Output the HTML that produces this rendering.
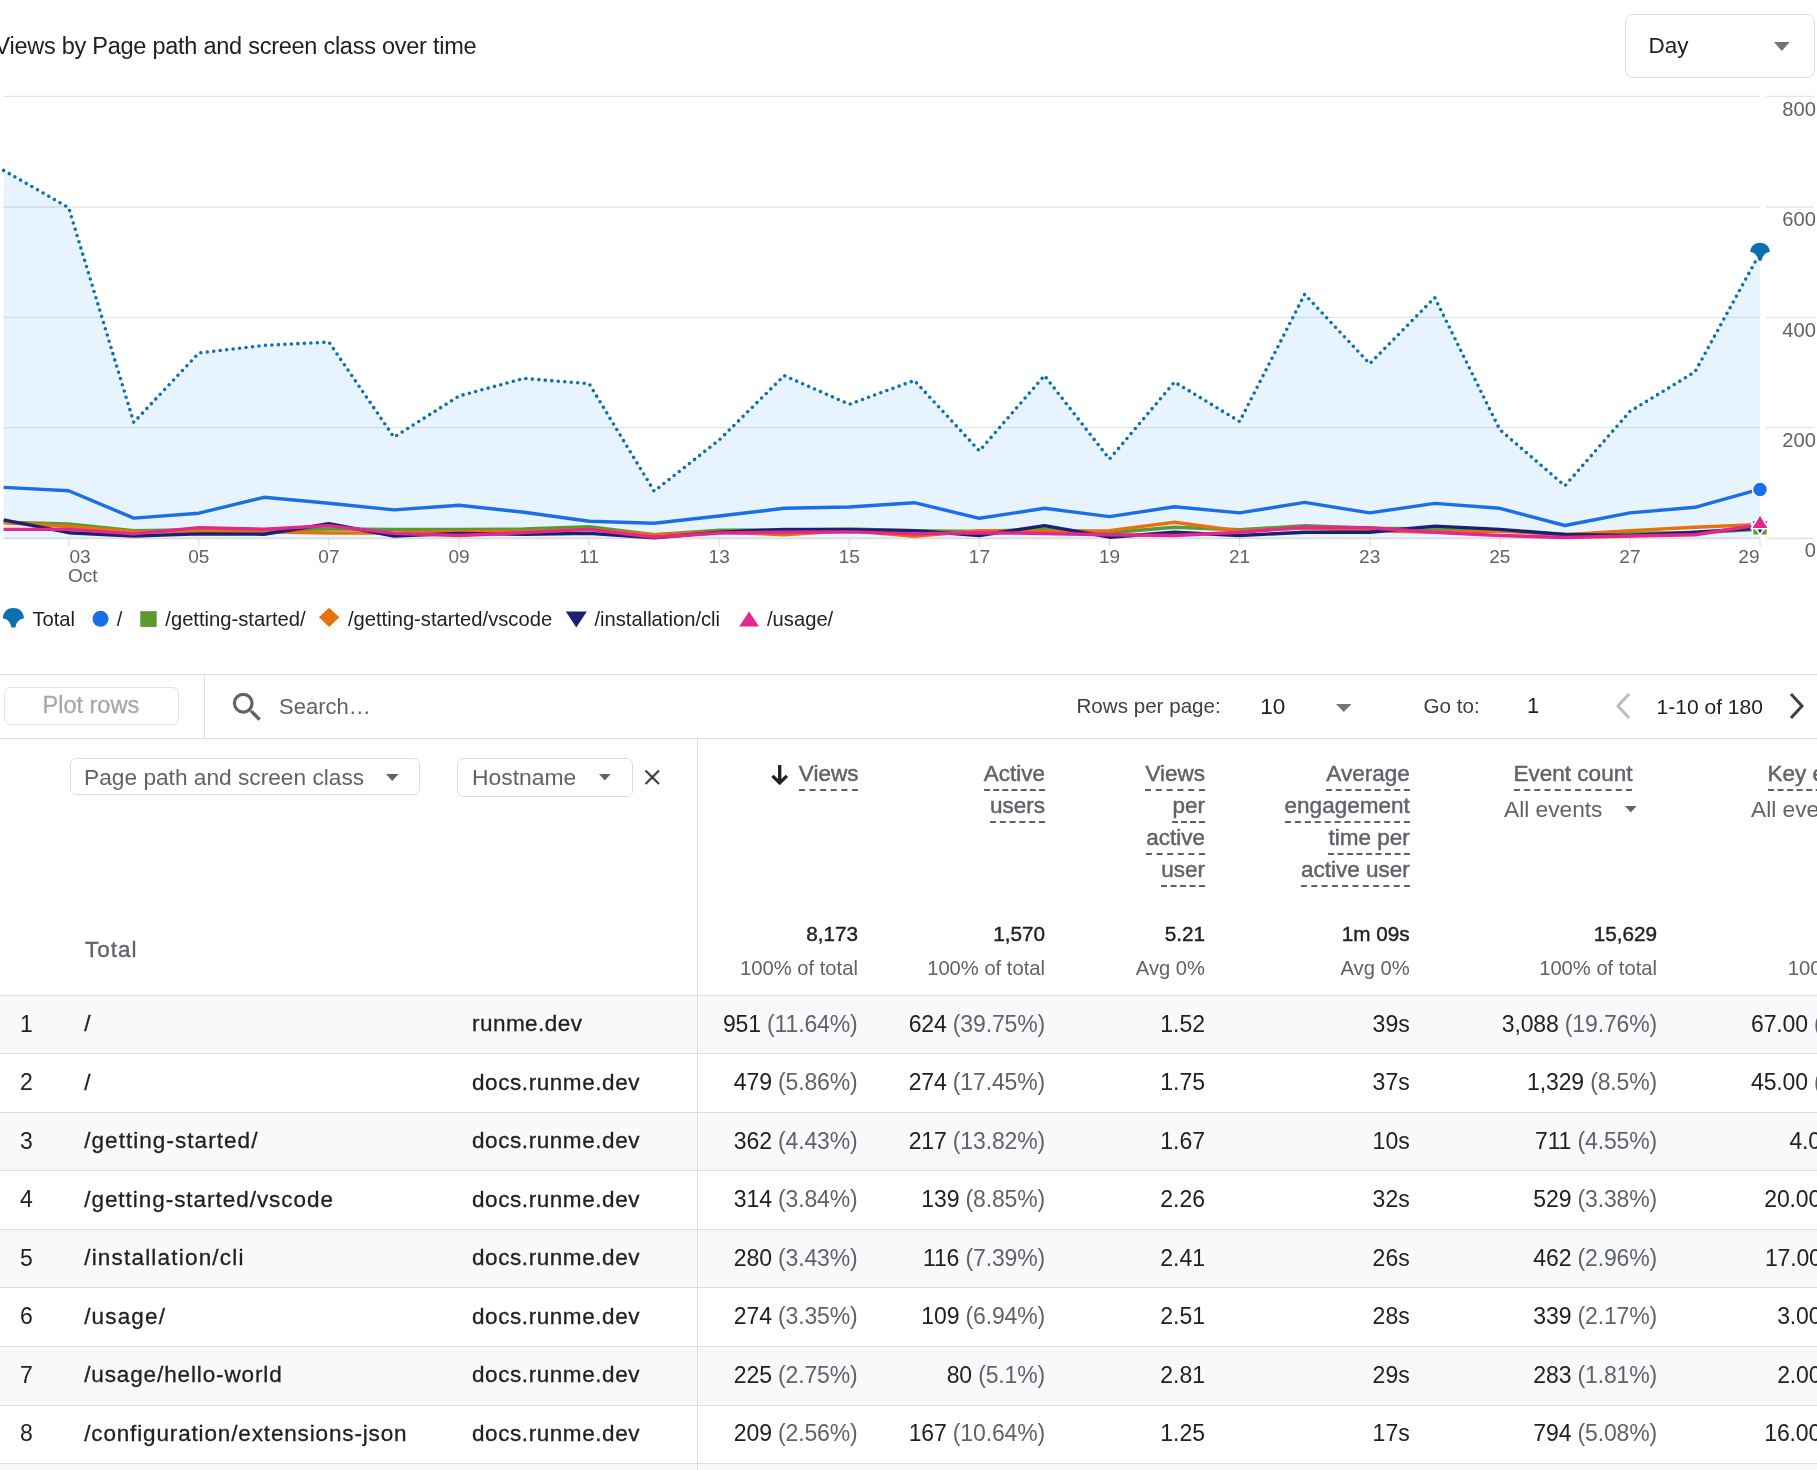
<!DOCTYPE html>
<html><head><meta charset="utf-8"><style>
html,body{margin:0;padding:0;background:#fff;width:1817px;height:1470px;overflow:hidden;position:relative}
body{font-family:"Liberation Sans", sans-serif}
.t{position:absolute;white-space:nowrap}
.u{display:inline-block;border-bottom:2px dashed #5f6368;padding-bottom:3.6px;line-height:inherit}
</style></head><body>
<div id="root" style="position:absolute;left:0;top:0;width:1817px;height:1470px;overflow:hidden;will-change:transform">
<div style="position:absolute;left:0;top:1464px;width:1817px;height:6px;background:#f8f9fa"></div>
<div style="position:absolute;left:0;top:1347px;width:1817px;height:58px;background:#f8f9fa"></div>
<div style="position:absolute;left:0;top:1230px;width:1817px;height:57px;background:#f8f9fa"></div>
<div style="position:absolute;left:0;top:1113px;width:1817px;height:57px;background:#f8f9fa"></div>
<div style="position:absolute;left:0;top:996px;width:1817px;height:57px;background:#f8f9fa"></div>
<svg width="1817" height="600" style="position:absolute;left:0;top:0">
<polygon points="3.65,538.5 3.65,170.40 68.70,207.70 133.75,422.40 198.80,353.00 263.85,345.40 328.90,342.10 393.95,437.20 459.00,396.00 524.05,378.40 589.10,383.70 654.15,491.20 719.20,440.00 784.25,375.60 849.30,404.30 914.35,380.50 979.40,450.90 1044.45,375.60 1109.50,459.10 1174.55,382.00 1239.60,421.50 1304.65,294.30 1369.70,363.70 1434.75,297.60 1499.80,429.70 1564.85,485.80 1629.90,411.50 1694.95,371.90 1760.00,253.00 1760.00,538.5" fill="#e8f4fd"/>
<line x1="3" y1="96.3" x2="1760" y2="96.3" stroke="rgba(0,0,0,0.1)" stroke-width="1.3"/>
<line x1="1766" y1="96.3" x2="1814" y2="96.3" stroke="rgba(0,0,0,0.1)" stroke-width="1.3"/>
<line x1="3" y1="207.0" x2="1760" y2="207.0" stroke="rgba(0,0,0,0.1)" stroke-width="1.3"/>
<line x1="1766" y1="207.0" x2="1814" y2="207.0" stroke="rgba(0,0,0,0.1)" stroke-width="1.3"/>
<line x1="3" y1="317.3" x2="1760" y2="317.3" stroke="rgba(0,0,0,0.1)" stroke-width="1.3"/>
<line x1="1766" y1="317.3" x2="1814" y2="317.3" stroke="rgba(0,0,0,0.1)" stroke-width="1.3"/>
<line x1="3" y1="427.6" x2="1760" y2="427.6" stroke="rgba(0,0,0,0.1)" stroke-width="1.3"/>
<line x1="1766" y1="427.6" x2="1814" y2="427.6" stroke="rgba(0,0,0,0.1)" stroke-width="1.3"/>
<line x1="3" y1="538.5" x2="1760" y2="538.5" stroke="rgba(0,0,0,0.12)" stroke-width="1.3"/>
<line x1="1766" y1="538.5" x2="1814" y2="538.5" stroke="rgba(0,0,0,0.12)" stroke-width="1.3"/>
<line x1="68.70" y1="538.5" x2="68.70" y2="546.5" stroke="rgba(0,0,0,0.12)" stroke-width="1.3"/>
<line x1="198.80" y1="538.5" x2="198.80" y2="546.5" stroke="rgba(0,0,0,0.12)" stroke-width="1.3"/>
<line x1="328.90" y1="538.5" x2="328.90" y2="546.5" stroke="rgba(0,0,0,0.12)" stroke-width="1.3"/>
<line x1="459.00" y1="538.5" x2="459.00" y2="546.5" stroke="rgba(0,0,0,0.12)" stroke-width="1.3"/>
<line x1="589.10" y1="538.5" x2="589.10" y2="546.5" stroke="rgba(0,0,0,0.12)" stroke-width="1.3"/>
<line x1="719.20" y1="538.5" x2="719.20" y2="546.5" stroke="rgba(0,0,0,0.12)" stroke-width="1.3"/>
<line x1="849.30" y1="538.5" x2="849.30" y2="546.5" stroke="rgba(0,0,0,0.12)" stroke-width="1.3"/>
<line x1="979.40" y1="538.5" x2="979.40" y2="546.5" stroke="rgba(0,0,0,0.12)" stroke-width="1.3"/>
<line x1="1109.50" y1="538.5" x2="1109.50" y2="546.5" stroke="rgba(0,0,0,0.12)" stroke-width="1.3"/>
<line x1="1239.60" y1="538.5" x2="1239.60" y2="546.5" stroke="rgba(0,0,0,0.12)" stroke-width="1.3"/>
<line x1="1369.70" y1="538.5" x2="1369.70" y2="546.5" stroke="rgba(0,0,0,0.12)" stroke-width="1.3"/>
<line x1="1499.80" y1="538.5" x2="1499.80" y2="546.5" stroke="rgba(0,0,0,0.12)" stroke-width="1.3"/>
<line x1="1629.90" y1="538.5" x2="1629.90" y2="546.5" stroke="rgba(0,0,0,0.12)" stroke-width="1.3"/>
<line x1="1760.00" y1="538.5" x2="1760.00" y2="546.5" stroke="rgba(0,0,0,0.12)" stroke-width="1.3"/>
<polyline points="3.65,522.30 68.70,524.00 133.75,530.60 198.80,529.80 263.85,529.80 328.90,529.00 393.95,529.40 459.00,529.40 524.05,529.00 589.10,526.80 654.15,534.70 719.20,530.10 784.25,530.00 849.30,529.00 914.35,530.60 979.40,531.40 1044.45,529.00 1109.50,532.70 1174.55,527.30 1239.60,529.80 1304.65,525.60 1369.70,528.10 1434.75,529.00 1499.80,530.60 1564.85,534.40 1629.90,533.00 1694.95,532.70 1760.00,529.40" fill="none" stroke="#5a9a32" stroke-width="3.4" stroke-linejoin="round"/>
<polyline points="3.65,522.80 68.70,526.50 133.75,531.70 198.80,531.40 263.85,531.70 328.90,533.00 393.95,533.00 459.00,531.70 524.05,531.40 589.10,529.50 654.15,534.70 719.20,532.00 784.25,534.70 849.30,530.60 914.35,536.40 979.40,530.60 1044.45,531.40 1109.50,530.60 1174.55,522.30 1239.60,531.00 1304.65,528.10 1369.70,530.60 1434.75,532.20 1499.80,531.00 1564.85,534.70 1629.90,530.60 1694.95,527.30 1760.00,524.50" fill="none" stroke="#e8710a" stroke-width="3.4" stroke-linejoin="round"/>
<polyline points="3.65,519.90 68.70,532.70 133.75,536.00 198.80,533.90 263.85,534.20 328.90,523.70 393.95,536.00 459.00,533.40 524.05,534.30 589.10,533.40 654.15,537.70 719.20,532.20 784.25,529.40 849.30,529.80 914.35,530.60 979.40,535.50 1044.45,525.60 1109.50,537.20 1174.55,532.20 1239.60,535.50 1304.65,532.20 1369.70,532.20 1434.75,526.10 1499.80,529.40 1564.85,534.50 1629.90,535.50 1694.95,532.20 1760.00,528.10" fill="none" stroke="#1c2075" stroke-width="3.4" stroke-linejoin="round"/>
<polyline points="3.65,529.40 68.70,529.40 133.75,533.90 198.80,527.60 263.85,529.20 328.90,525.60 393.95,533.40 459.00,535.50 524.05,532.60 589.10,529.40 654.15,537.20 719.20,533.00 784.25,532.20 849.30,531.90 914.35,533.90 979.40,532.70 1044.45,533.50 1109.50,534.70 1174.55,535.50 1239.60,532.20 1304.65,527.30 1369.70,527.80 1434.75,532.20 1499.80,535.50 1564.85,537.50 1629.90,536.00 1694.95,534.70 1760.00,524.80" fill="none" stroke="#e2288c" stroke-width="3.4" stroke-linejoin="round"/>
<polyline points="3.65,487.40 68.70,490.70 133.75,518.10 198.80,513.20 263.85,497.30 328.90,503.30 393.95,509.90 459.00,505.30 524.05,512.20 589.10,521.20 654.15,523.20 719.20,516.00 784.25,508.30 849.30,507.00 914.35,502.70 979.40,518.30 1044.45,508.30 1109.50,516.60 1174.55,506.80 1239.60,512.90 1304.65,502.40 1369.70,512.90 1434.75,503.40 1499.80,508.30 1564.85,525.50 1629.90,512.90 1694.95,507.30 1760.00,489.20" fill="none" stroke="#1a6fe8" stroke-width="3.4" stroke-linejoin="round"/>
<polyline points="3.65,170.40 68.70,207.70 133.75,422.40 198.80,353.00 263.85,345.40 328.90,342.10 393.95,437.20 459.00,396.00 524.05,378.40 589.10,383.70 654.15,491.20 719.20,440.00 784.25,375.60 849.30,404.30 914.35,380.50 979.40,450.90 1044.45,375.60 1109.50,459.10 1174.55,382.00 1239.60,421.50 1304.65,294.30 1369.70,363.70 1434.75,297.60 1499.80,429.70 1564.85,485.80 1629.90,411.50 1694.95,371.90 1760.00,253.00" fill="none" stroke="#0b70b0" stroke-width="3.6" stroke-linecap="round" stroke-dasharray="0 6.5"/>
<rect x="1752.5" y="520.3" width="15" height="15" fill="#5a9a32" stroke="#fff" stroke-width="1.6"/>
<path d="M1751.5,524.5 L1760.0,516 L1768.5,524.5 L1760.0,533 Z" fill="#e8710a" stroke="#fff" stroke-width="1.6"/>
<path d="M1751.0,520.8 L1769.0,520.8 L1760.0,534.8 Z" fill="#1c2075" stroke="#fff" stroke-width="1.6"/>
<path d="M1751.3,528.7 L1760.0,514.4 L1768.7,528.7 Z" fill="#e2288c" stroke="#fff" stroke-width="1.6"/>
<circle cx="1760.0" cy="489.5" r="7.5" fill="#1a6fe8" stroke="#fff" stroke-width="1.5"/>
<path d="M1749.5,252.5 C1749.5,245.0 1755.0,242 1760.0,242 C1765.0,242 1770.5,245.0 1770.5,252.5 C1766.0,253.0 1763.0,256.0 1762.0,261.5 L1758.0,261.5 C1757.0,256.0 1754.0,253.0 1749.5,252.5 Z" fill="#0b70b0" stroke="#fff" stroke-width="1.5"/>
</svg>
<div class="t" style="left:-5.50px;top:34.62px;font-size:23.5px;line-height:23.5px;color:#202124;font-weight:400;letter-spacing:-0.257px;">Views by Page path and screen class over time</div>
<div style="position:absolute;left:1624.5px;top:14.2px;width:190.9px;height:63.4px;box-sizing:border-box;border:1px solid #dadce0;border-radius:8px"></div>
<div class="t" style="left:1648.60px;top:35.27px;font-size:22.5px;line-height:22.5px;color:#202124;font-weight:400;">Day</div>
<svg style="position:absolute;left:1774px;top:42px" width="16" height="9"><path d="M0,0 L15.7,0 L7.85,9 Z" fill="#757575"/></svg>
<div class="t" style="right:1.00px;top:98.73px;font-size:20.2px;line-height:20.2px;color:#5f6368;font-weight:400;">800</div>
<div class="t" style="right:1.00px;top:209.43px;font-size:20.2px;line-height:20.2px;color:#5f6368;font-weight:400;">600</div>
<div class="t" style="right:1.00px;top:319.73px;font-size:20.2px;line-height:20.2px;color:#5f6368;font-weight:400;">400</div>
<div class="t" style="right:1.00px;top:430.03px;font-size:20.2px;line-height:20.2px;color:#5f6368;font-weight:400;">200</div>
<div class="t" style="right:1.00px;top:539.93px;font-size:20.2px;line-height:20.2px;color:#5f6368;font-weight:400;">0</div>
<div class="t" style="left:69.40px;top:546.55px;font-size:19px;line-height:19px;color:#5f6368;font-weight:400;">03</div>
<div class="t" style="left:68.10px;top:565.75px;font-size:19px;line-height:19px;color:#5f6368;font-weight:400;">Oct</div>
<div class="t" style="left:-301.20px;width:1000px;text-align:center;top:546.55px;font-size:19px;line-height:19px;color:#5f6368;font-weight:400;">05</div>
<div class="t" style="left:-171.10px;width:1000px;text-align:center;top:546.55px;font-size:19px;line-height:19px;color:#5f6368;font-weight:400;">07</div>
<div class="t" style="left:-41.00px;width:1000px;text-align:center;top:546.55px;font-size:19px;line-height:19px;color:#5f6368;font-weight:400;">09</div>
<div class="t" style="left:89.10px;width:1000px;text-align:center;top:546.55px;font-size:19px;line-height:19px;color:#5f6368;font-weight:400;">11</div>
<div class="t" style="left:219.20px;width:1000px;text-align:center;top:546.55px;font-size:19px;line-height:19px;color:#5f6368;font-weight:400;">13</div>
<div class="t" style="left:349.30px;width:1000px;text-align:center;top:546.55px;font-size:19px;line-height:19px;color:#5f6368;font-weight:400;">15</div>
<div class="t" style="left:479.40px;width:1000px;text-align:center;top:546.55px;font-size:19px;line-height:19px;color:#5f6368;font-weight:400;">17</div>
<div class="t" style="left:609.50px;width:1000px;text-align:center;top:546.55px;font-size:19px;line-height:19px;color:#5f6368;font-weight:400;">19</div>
<div class="t" style="left:739.60px;width:1000px;text-align:center;top:546.55px;font-size:19px;line-height:19px;color:#5f6368;font-weight:400;">21</div>
<div class="t" style="left:869.70px;width:1000px;text-align:center;top:546.55px;font-size:19px;line-height:19px;color:#5f6368;font-weight:400;">23</div>
<div class="t" style="left:999.80px;width:1000px;text-align:center;top:546.55px;font-size:19px;line-height:19px;color:#5f6368;font-weight:400;">25</div>
<div class="t" style="left:1129.90px;width:1000px;text-align:center;top:546.55px;font-size:19px;line-height:19px;color:#5f6368;font-weight:400;">27</div>
<div class="t" style="right:57.50px;top:546.55px;font-size:19px;line-height:19px;color:#5f6368;font-weight:400;">29</div>
<svg style="position:absolute;left:0;top:600px" width="800" height="40"><path d="M2.9000000000000004,18.6 C2.9000000000000004,11.1 8.4,8.1 13.4,8.1 C18.4,8.1 23.9,11.1 23.9,18.6 C19.4,19.1 16.4,22.1 15.4,27.6 L11.4,27.6 C10.4,22.1 7.4,19.1 2.9000000000000004,18.6 Z" fill="#0b70b0"/><circle cx="100.5" cy="18.8" r="8" fill="#1a6fe8"/><rect x="140.3" y="11.2" width="16.4" height="15.7" fill="#5a9a32"/><path d="M319,17.3 L329.15,7.7 L339.3,17.3 L329.15,26.9 Z" fill="#e8710a"/><path d="M565.8,11.5 L586.8,11.5 L576.3,27.4 Z" fill="#1c2075"/><path d="M739.2,26.6 L749.1,11.5 L759,26.6 Z" fill="#e2288c"/></svg>
<div class="t" style="left:32.40px;top:609.03px;font-size:20.2px;line-height:20.2px;color:#202124;font-weight:400;">Total</div>
<div class="t" style="left:116.70px;top:609.03px;font-size:20.2px;line-height:20.2px;color:#202124;font-weight:400;">/</div>
<div class="t" style="left:165.30px;top:609.03px;font-size:20.2px;line-height:20.2px;color:#202124;font-weight:400;">/getting-started/</div>
<div class="t" style="left:347.90px;top:609.03px;font-size:20.2px;line-height:20.2px;color:#202124;font-weight:400;">/getting-started/vscode</div>
<div class="t" style="left:594.40px;top:609.03px;font-size:20.2px;line-height:20.2px;color:#202124;font-weight:400;">/installation/cli</div>
<div class="t" style="left:767.00px;top:609.03px;font-size:20.2px;line-height:20.2px;color:#202124;font-weight:400;">/usage/</div>
<div style="position:absolute;left:0px;top:674px;width:1817px;height:1px;background:#dadce0"></div>
<div style="position:absolute;left:0px;top:738px;width:1817px;height:1px;background:#dadce0"></div>
<div style="position:absolute;left:204px;top:674px;width:1px;height:64px;background:#dadce0"></div>
<div style="position:absolute;left:4px;top:687.2px;width:174.6px;height:38.3px;box-sizing:border-box;border:1px solid #e3e3e3;border-radius:7px"></div>
<div class="t" style="left:42.50px;top:694.23px;font-size:23.5px;line-height:23.5px;color:#a5a8ac;font-weight:400;-webkit-text-stroke:0.3px #a5a8ac;">Plot rows</div>
<svg style="position:absolute;left:227.5px;top:688px" width="38.5" height="38.5" viewBox="0 0 24 24"><path fill="#5f6368" d="M15.5 14h-.79l-.28-.27A6.471 6.471 0 0 0 16 9.5 6.5 6.5 0 1 0 9.5 16c1.61 0 3.09-.59 4.23-1.57l.27.28v.79l5 4.99L20.49 19l-4.99-5zm-6 0C7.01 14 5 11.99 5 9.5S7.01 5 9.5 5 14 7.01 14 9.5 11.99 14 9.5 14z"/></svg>
<div class="t" style="left:279.00px;top:695.80px;font-size:22px;line-height:22px;color:#5f6368;font-weight:400;">Search…</div>
<div class="t" style="left:1076.50px;top:695.79px;font-size:20.6px;line-height:20.6px;color:#3c4043;font-weight:400;">Rows per page:</div>
<div class="t" style="left:1260.20px;top:695.88px;font-size:22.5px;line-height:22.5px;color:#202124;font-weight:400;">10</div>
<svg style="position:absolute;left:1336px;top:703.8px" width="16" height="9"><path d="M0,0 L15.5,0 L7.75,8 Z" fill="#757575"/></svg>
<div class="t" style="left:1423.60px;top:695.99px;font-size:20.6px;line-height:20.6px;color:#3c4043;font-weight:400;">Go to:</div>
<div class="t" style="left:1526.90px;top:695.30px;font-size:22px;line-height:22px;color:#202124;font-weight:400;">1</div>
<svg style="position:absolute;left:1612px;top:690px" width="24" height="32"><path d="M17,4 L6,16 L17,28" fill="none" stroke="#bdbdbd" stroke-width="3"/></svg>
<div class="t" style="left:1656.60px;top:695.65px;font-size:21px;line-height:21px;color:#202124;font-weight:400;">1-10 of 180</div>
<svg style="position:absolute;left:1786px;top:690px" width="24" height="32"><path d="M5,4 L16,16 L5,28" fill="none" stroke="#3c4043" stroke-width="3"/></svg>
<div style="position:absolute;left:697px;top:738px;width:1px;height:732px;background:#dadce0"></div>
<div style="position:absolute;left:70.3px;top:758.3px;width:350.2px;height:37.2px;box-sizing:border-box;border:1px solid #dadce0;border-radius:6px"></div>
<div class="t" style="left:84.10px;top:765.81px;font-size:22.7px;line-height:22.7px;color:#5f6368;font-weight:400;">Page path and screen class</div>
<svg style="position:absolute;left:386px;top:773.5px" width="13" height="8"><path d="M0,0 L12.5,0 L6.25,7 Z" fill="#5f6368"/></svg>
<div style="position:absolute;left:457.3px;top:758.2px;width:175.3px;height:38.4px;box-sizing:border-box;border:1px solid #dadce0;border-radius:6px"></div>
<div class="t" style="left:472.00px;top:765.74px;font-size:22.9px;line-height:22.9px;color:#5f6368;font-weight:400;">Hostname</div>
<svg style="position:absolute;left:598.7px;top:773.9px" width="13" height="8"><path d="M0,0 L11.6,0 L5.8,6.5 Z" fill="#5f6368"/></svg>
<svg style="position:absolute;left:644px;top:768.5px" width="17" height="17"><path d="M1.5,1.5 L15,15 M15,1.5 L1.5,15" stroke="#3c4043" stroke-width="2.2"/></svg>
<div class="t" style="right:958.60px;top:762.67px;font-size:22.5px;line-height:22.5px;color:#5f6368;font-weight:400;-webkit-text-stroke:0.45px #5f6368;"><span class="u">Views</span></div>
<svg style="position:absolute;left:770px;top:764px" width="20" height="22"><path d="M9.7,1 L9.7,19 M2.5,11.8 L9.7,19 L16.9,11.8" fill="none" stroke="#202124" stroke-width="3.3"/></svg>
<div class="t" style="right:772.00px;top:762.67px;font-size:22.5px;line-height:22.5px;color:#5f6368;font-weight:400;-webkit-text-stroke:0.45px #5f6368;"><span class="u">Active</span></div>
<div class="t" style="right:772.00px;top:794.77px;font-size:22.5px;line-height:22.5px;color:#5f6368;font-weight:400;-webkit-text-stroke:0.45px #5f6368;"><span class="u">users</span></div>
<div class="t" style="right:612.00px;top:762.67px;font-size:22.5px;line-height:22.5px;color:#5f6368;font-weight:400;-webkit-text-stroke:0.45px #5f6368;"><span class="u">Views</span></div>
<div class="t" style="right:612.00px;top:794.77px;font-size:22.5px;line-height:22.5px;color:#5f6368;font-weight:400;-webkit-text-stroke:0.45px #5f6368;"><span class="u">per</span></div>
<div class="t" style="right:612.00px;top:826.88px;font-size:22.5px;line-height:22.5px;color:#5f6368;font-weight:400;-webkit-text-stroke:0.45px #5f6368;"><span class="u">active</span></div>
<div class="t" style="right:612.00px;top:858.97px;font-size:22.5px;line-height:22.5px;color:#5f6368;font-weight:400;-webkit-text-stroke:0.45px #5f6368;"><span class="u">user</span></div>
<div class="t" style="right:407.30px;top:762.67px;font-size:22.5px;line-height:22.5px;color:#5f6368;font-weight:400;-webkit-text-stroke:0.45px #5f6368;"><span class="u">Average</span></div>
<div class="t" style="right:407.30px;top:794.77px;font-size:22.5px;line-height:22.5px;color:#5f6368;font-weight:400;-webkit-text-stroke:0.45px #5f6368;"><span class="u">engagement</span></div>
<div class="t" style="right:407.30px;top:826.88px;font-size:22.5px;line-height:22.5px;color:#5f6368;font-weight:400;-webkit-text-stroke:0.45px #5f6368;"><span class="u">time per</span></div>
<div class="t" style="right:407.30px;top:858.97px;font-size:22.5px;line-height:22.5px;color:#5f6368;font-weight:400;-webkit-text-stroke:0.45px #5f6368;"><span class="u">active user</span></div>
<div class="t" style="right:184.60px;top:762.67px;font-size:22.5px;line-height:22.5px;color:#5f6368;font-weight:400;-webkit-text-stroke:0.45px #5f6368;"><span class="u">Event count</span></div>
<div class="t" style="left:1504.10px;top:797.50px;font-size:22.7px;line-height:22.7px;color:#5f6368;font-weight:400;">All events</div>
<svg style="position:absolute;left:1624.7px;top:805.6px" width="13" height="8"><path d="M0,0 L11.5,0 L5.75,6.5 Z" fill="#5f6368"/></svg>
<div class="t" style="left:1767.50px;top:762.67px;font-size:22.5px;line-height:22.5px;color:#5f6368;font-weight:400;-webkit-text-stroke:0.45px #5f6368;"><span class="u">Key events</span></div>
<div class="t" style="left:1751.10px;top:797.50px;font-size:22.7px;line-height:22.7px;color:#5f6368;font-weight:400;">All events</div>
<div class="t" style="left:85.00px;top:938.98px;font-size:22.5px;line-height:22.5px;color:#5f6368;font-weight:400;letter-spacing:1px;-webkit-text-stroke:0.35px #5f6368;">Total</div>
<div class="t" style="right:959.10px;top:924.40px;font-size:20.7px;line-height:20.7px;color:#202124;font-weight:400;-webkit-text-stroke:0.4px #202124;">8,173</div>
<div class="t" style="right:959.10px;top:957.73px;font-size:20.2px;line-height:20.2px;color:#5f6368;font-weight:400;">100% of total</div>
<div class="t" style="right:772.00px;top:924.40px;font-size:20.7px;line-height:20.7px;color:#202124;font-weight:400;-webkit-text-stroke:0.4px #202124;">1,570</div>
<div class="t" style="right:772.00px;top:957.73px;font-size:20.2px;line-height:20.2px;color:#5f6368;font-weight:400;">100% of total</div>
<div class="t" style="right:612.00px;top:924.40px;font-size:20.7px;line-height:20.7px;color:#202124;font-weight:400;-webkit-text-stroke:0.4px #202124;">5.21</div>
<div class="t" style="right:612.00px;top:957.73px;font-size:20.2px;line-height:20.2px;color:#5f6368;font-weight:400;">Avg 0%</div>
<div class="t" style="right:407.30px;top:924.40px;font-size:20.7px;line-height:20.7px;color:#202124;font-weight:400;-webkit-text-stroke:0.4px #202124;">1m 09s</div>
<div class="t" style="right:407.30px;top:957.73px;font-size:20.2px;line-height:20.2px;color:#5f6368;font-weight:400;">Avg 0%</div>
<div class="t" style="right:160.00px;top:924.40px;font-size:20.7px;line-height:20.7px;color:#202124;font-weight:400;-webkit-text-stroke:0.4px #202124;">15,629</div>
<div class="t" style="right:160.00px;top:957.73px;font-size:20.2px;line-height:20.2px;color:#5f6368;font-weight:400;">100% of total</div>
<div class="t" style="left:1787.70px;top:957.73px;font-size:20.2px;line-height:20.2px;color:#5f6368;font-weight:400;">100% of total</div>
<div style="position:absolute;left:0px;top:995px;width:1817px;height:1px;background:#dadce0"></div>
<div style="position:absolute;left:0px;top:1053px;width:1817px;height:1px;background:#dadce0"></div>
<div style="position:absolute;left:0px;top:1112px;width:1817px;height:1px;background:#dadce0"></div>
<div style="position:absolute;left:0px;top:1170px;width:1817px;height:1px;background:#dadce0"></div>
<div style="position:absolute;left:0px;top:1229px;width:1817px;height:1px;background:#dadce0"></div>
<div style="position:absolute;left:0px;top:1287px;width:1817px;height:1px;background:#dadce0"></div>
<div style="position:absolute;left:0px;top:1346px;width:1817px;height:1px;background:#dadce0"></div>
<div style="position:absolute;left:0px;top:1405px;width:1817px;height:1px;background:#dadce0"></div>
<div style="position:absolute;left:0px;top:1463px;width:1817px;height:1px;background:#dadce0"></div>
<div class="t" style="left:20.00px;top:1012.65px;font-size:23px;line-height:23px;color:#202124;font-weight:400;">1</div>
<div class="t" style="left:84.20px;top:1013.08px;font-size:22.5px;line-height:22.5px;color:#202124;font-weight:400;-webkit-text-stroke:0.3px #202124;">/</div>
<div class="t" style="left:472.00px;top:1013.08px;font-size:22.5px;line-height:22.5px;color:#202124;font-weight:400;letter-spacing:0.461px;-webkit-text-stroke:0.3px #202124;">runme.dev</div>
<div class="t" style="right:959.50px;top:1012.65px;font-size:23px;line-height:23px;color:#202124;font-weight:400;letter-spacing:-0.15px;">951 <span style="color:#5f6368">(11.64%)</span></div>
<div class="t" style="right:772.00px;top:1012.65px;font-size:23px;line-height:23px;color:#202124;font-weight:400;letter-spacing:-0.15px;">624 <span style="color:#5f6368">(39.75%)</span></div>
<div class="t" style="right:612.00px;top:1012.65px;font-size:23px;line-height:23px;color:#202124;font-weight:400;">1.52</div>
<div class="t" style="right:407.30px;top:1012.65px;font-size:23px;line-height:23px;color:#202124;font-weight:400;">39s</div>
<div class="t" style="right:160.00px;top:1012.65px;font-size:23px;line-height:23px;color:#202124;font-weight:400;letter-spacing:-0.15px;">3,088 <span style="color:#5f6368">(19.76%)</span></div>
<div class="t" style="left:1751.00px;top:1012.65px;font-size:23px;line-height:23px;color:#202124;font-weight:400;letter-spacing:-0.15px;">67.00 <span style="color:#5f6368">(0%)</span></div>
<div class="t" style="left:20.00px;top:1071.18px;font-size:23px;line-height:23px;color:#202124;font-weight:400;">2</div>
<div class="t" style="left:84.20px;top:1071.61px;font-size:22.5px;line-height:22.5px;color:#202124;font-weight:400;-webkit-text-stroke:0.3px #202124;">/</div>
<div class="t" style="left:472.00px;top:1071.61px;font-size:22.5px;line-height:22.5px;color:#202124;font-weight:400;letter-spacing:0.57px;-webkit-text-stroke:0.3px #202124;">docs.runme.dev</div>
<div class="t" style="right:959.50px;top:1071.18px;font-size:23px;line-height:23px;color:#202124;font-weight:400;letter-spacing:-0.15px;">479 <span style="color:#5f6368">(5.86%)</span></div>
<div class="t" style="right:772.00px;top:1071.18px;font-size:23px;line-height:23px;color:#202124;font-weight:400;letter-spacing:-0.15px;">274 <span style="color:#5f6368">(17.45%)</span></div>
<div class="t" style="right:612.00px;top:1071.18px;font-size:23px;line-height:23px;color:#202124;font-weight:400;">1.75</div>
<div class="t" style="right:407.30px;top:1071.18px;font-size:23px;line-height:23px;color:#202124;font-weight:400;">37s</div>
<div class="t" style="right:160.00px;top:1071.18px;font-size:23px;line-height:23px;color:#202124;font-weight:400;letter-spacing:-0.15px;">1,329 <span style="color:#5f6368">(8.5%)</span></div>
<div class="t" style="left:1751.00px;top:1071.18px;font-size:23px;line-height:23px;color:#202124;font-weight:400;letter-spacing:-0.15px;">45.00 <span style="color:#5f6368">(0%)</span></div>
<div class="t" style="left:20.00px;top:1129.71px;font-size:23px;line-height:23px;color:#202124;font-weight:400;">3</div>
<div class="t" style="left:84.20px;top:1130.13px;font-size:22.5px;line-height:22.5px;color:#202124;font-weight:400;letter-spacing:1.054px;-webkit-text-stroke:0.3px #202124;">/getting-started/</div>
<div class="t" style="left:472.00px;top:1130.13px;font-size:22.5px;line-height:22.5px;color:#202124;font-weight:400;letter-spacing:0.57px;-webkit-text-stroke:0.3px #202124;">docs.runme.dev</div>
<div class="t" style="right:959.50px;top:1129.71px;font-size:23px;line-height:23px;color:#202124;font-weight:400;letter-spacing:-0.15px;">362 <span style="color:#5f6368">(4.43%)</span></div>
<div class="t" style="right:772.00px;top:1129.71px;font-size:23px;line-height:23px;color:#202124;font-weight:400;letter-spacing:-0.15px;">217 <span style="color:#5f6368">(13.82%)</span></div>
<div class="t" style="right:612.00px;top:1129.71px;font-size:23px;line-height:23px;color:#202124;font-weight:400;">1.67</div>
<div class="t" style="right:407.30px;top:1129.71px;font-size:23px;line-height:23px;color:#202124;font-weight:400;">10s</div>
<div class="t" style="right:160.00px;top:1129.71px;font-size:23px;line-height:23px;color:#202124;font-weight:400;letter-spacing:-0.15px;">711 <span style="color:#5f6368">(4.55%)</span></div>
<div class="t" style="left:1789.40px;top:1129.71px;font-size:23px;line-height:23px;color:#202124;font-weight:400;letter-spacing:-0.15px;">4.00 <span style="color:#5f6368">(0%)</span></div>
<div class="t" style="left:20.00px;top:1188.24px;font-size:23px;line-height:23px;color:#202124;font-weight:400;">4</div>
<div class="t" style="left:84.20px;top:1188.66px;font-size:22.5px;line-height:22.5px;color:#202124;font-weight:400;letter-spacing:0.962px;-webkit-text-stroke:0.3px #202124;">/getting-started/vscode</div>
<div class="t" style="left:472.00px;top:1188.66px;font-size:22.5px;line-height:22.5px;color:#202124;font-weight:400;letter-spacing:0.57px;-webkit-text-stroke:0.3px #202124;">docs.runme.dev</div>
<div class="t" style="right:959.50px;top:1188.24px;font-size:23px;line-height:23px;color:#202124;font-weight:400;letter-spacing:-0.15px;">314 <span style="color:#5f6368">(3.84%)</span></div>
<div class="t" style="right:772.00px;top:1188.24px;font-size:23px;line-height:23px;color:#202124;font-weight:400;letter-spacing:-0.15px;">139 <span style="color:#5f6368">(8.85%)</span></div>
<div class="t" style="right:612.00px;top:1188.24px;font-size:23px;line-height:23px;color:#202124;font-weight:400;">2.26</div>
<div class="t" style="right:407.30px;top:1188.24px;font-size:23px;line-height:23px;color:#202124;font-weight:400;">32s</div>
<div class="t" style="right:160.00px;top:1188.24px;font-size:23px;line-height:23px;color:#202124;font-weight:400;letter-spacing:-0.15px;">529 <span style="color:#5f6368">(3.38%)</span></div>
<div class="t" style="left:1764.30px;top:1188.24px;font-size:23px;line-height:23px;color:#202124;font-weight:400;letter-spacing:-0.15px;">20.00 <span style="color:#5f6368">(0%)</span></div>
<div class="t" style="left:20.00px;top:1246.77px;font-size:23px;line-height:23px;color:#202124;font-weight:400;">5</div>
<div class="t" style="left:84.20px;top:1247.20px;font-size:22.5px;line-height:22.5px;color:#202124;font-weight:400;letter-spacing:1.201px;-webkit-text-stroke:0.3px #202124;">/installation/cli</div>
<div class="t" style="left:472.00px;top:1247.20px;font-size:22.5px;line-height:22.5px;color:#202124;font-weight:400;letter-spacing:0.57px;-webkit-text-stroke:0.3px #202124;">docs.runme.dev</div>
<div class="t" style="right:959.50px;top:1246.77px;font-size:23px;line-height:23px;color:#202124;font-weight:400;letter-spacing:-0.15px;">280 <span style="color:#5f6368">(3.43%)</span></div>
<div class="t" style="right:772.00px;top:1246.77px;font-size:23px;line-height:23px;color:#202124;font-weight:400;letter-spacing:-0.15px;">116 <span style="color:#5f6368">(7.39%)</span></div>
<div class="t" style="right:612.00px;top:1246.77px;font-size:23px;line-height:23px;color:#202124;font-weight:400;">2.41</div>
<div class="t" style="right:407.30px;top:1246.77px;font-size:23px;line-height:23px;color:#202124;font-weight:400;">26s</div>
<div class="t" style="right:160.00px;top:1246.77px;font-size:23px;line-height:23px;color:#202124;font-weight:400;letter-spacing:-0.15px;">462 <span style="color:#5f6368">(2.96%)</span></div>
<div class="t" style="left:1764.90px;top:1246.77px;font-size:23px;line-height:23px;color:#202124;font-weight:400;letter-spacing:-0.15px;">17.00 <span style="color:#5f6368">(0%)</span></div>
<div class="t" style="left:20.00px;top:1305.30px;font-size:23px;line-height:23px;color:#202124;font-weight:400;">6</div>
<div class="t" style="left:84.20px;top:1305.72px;font-size:22.5px;line-height:22.5px;color:#202124;font-weight:400;letter-spacing:1.148px;-webkit-text-stroke:0.3px #202124;">/usage/</div>
<div class="t" style="left:472.00px;top:1305.72px;font-size:22.5px;line-height:22.5px;color:#202124;font-weight:400;letter-spacing:0.57px;-webkit-text-stroke:0.3px #202124;">docs.runme.dev</div>
<div class="t" style="right:959.50px;top:1305.30px;font-size:23px;line-height:23px;color:#202124;font-weight:400;letter-spacing:-0.15px;">274 <span style="color:#5f6368">(3.35%)</span></div>
<div class="t" style="right:772.00px;top:1305.30px;font-size:23px;line-height:23px;color:#202124;font-weight:400;letter-spacing:-0.15px;">109 <span style="color:#5f6368">(6.94%)</span></div>
<div class="t" style="right:612.00px;top:1305.30px;font-size:23px;line-height:23px;color:#202124;font-weight:400;">2.51</div>
<div class="t" style="right:407.30px;top:1305.30px;font-size:23px;line-height:23px;color:#202124;font-weight:400;">28s</div>
<div class="t" style="right:160.00px;top:1305.30px;font-size:23px;line-height:23px;color:#202124;font-weight:400;letter-spacing:-0.15px;">339 <span style="color:#5f6368">(2.17%)</span></div>
<div class="t" style="left:1777.20px;top:1305.30px;font-size:23px;line-height:23px;color:#202124;font-weight:400;letter-spacing:-0.15px;">3.00 <span style="color:#5f6368">(0%)</span></div>
<div class="t" style="left:20.00px;top:1363.83px;font-size:23px;line-height:23px;color:#202124;font-weight:400;">7</div>
<div class="t" style="left:84.20px;top:1364.26px;font-size:22.5px;line-height:22.5px;color:#202124;font-weight:400;letter-spacing:0.876px;-webkit-text-stroke:0.3px #202124;">/usage/hello-world</div>
<div class="t" style="left:472.00px;top:1364.26px;font-size:22.5px;line-height:22.5px;color:#202124;font-weight:400;letter-spacing:0.57px;-webkit-text-stroke:0.3px #202124;">docs.runme.dev</div>
<div class="t" style="right:959.50px;top:1363.83px;font-size:23px;line-height:23px;color:#202124;font-weight:400;letter-spacing:-0.15px;">225 <span style="color:#5f6368">(2.75%)</span></div>
<div class="t" style="right:772.00px;top:1363.83px;font-size:23px;line-height:23px;color:#202124;font-weight:400;letter-spacing:-0.15px;">80 <span style="color:#5f6368">(5.1%)</span></div>
<div class="t" style="right:612.00px;top:1363.83px;font-size:23px;line-height:23px;color:#202124;font-weight:400;">2.81</div>
<div class="t" style="right:407.30px;top:1363.83px;font-size:23px;line-height:23px;color:#202124;font-weight:400;">29s</div>
<div class="t" style="right:160.00px;top:1363.83px;font-size:23px;line-height:23px;color:#202124;font-weight:400;letter-spacing:-0.15px;">283 <span style="color:#5f6368">(1.81%)</span></div>
<div class="t" style="left:1777.20px;top:1363.83px;font-size:23px;line-height:23px;color:#202124;font-weight:400;letter-spacing:-0.15px;">2.00 <span style="color:#5f6368">(0%)</span></div>
<div class="t" style="left:20.00px;top:1422.36px;font-size:23px;line-height:23px;color:#202124;font-weight:400;">8</div>
<div class="t" style="left:84.20px;top:1422.79px;font-size:22.5px;line-height:22.5px;color:#202124;font-weight:400;letter-spacing:0.852px;-webkit-text-stroke:0.3px #202124;">/configuration/extensions-json</div>
<div class="t" style="left:472.00px;top:1422.79px;font-size:22.5px;line-height:22.5px;color:#202124;font-weight:400;letter-spacing:0.57px;-webkit-text-stroke:0.3px #202124;">docs.runme.dev</div>
<div class="t" style="right:959.50px;top:1422.36px;font-size:23px;line-height:23px;color:#202124;font-weight:400;letter-spacing:-0.15px;">209 <span style="color:#5f6368">(2.56%)</span></div>
<div class="t" style="right:772.00px;top:1422.36px;font-size:23px;line-height:23px;color:#202124;font-weight:400;letter-spacing:-0.15px;">167 <span style="color:#5f6368">(10.64%)</span></div>
<div class="t" style="right:612.00px;top:1422.36px;font-size:23px;line-height:23px;color:#202124;font-weight:400;">1.25</div>
<div class="t" style="right:407.30px;top:1422.36px;font-size:23px;line-height:23px;color:#202124;font-weight:400;">17s</div>
<div class="t" style="right:160.00px;top:1422.36px;font-size:23px;line-height:23px;color:#202124;font-weight:400;letter-spacing:-0.15px;">794 <span style="color:#5f6368">(5.08%)</span></div>
<div class="t" style="left:1764.30px;top:1422.36px;font-size:23px;line-height:23px;color:#202124;font-weight:400;letter-spacing:-0.15px;">16.00 <span style="color:#5f6368">(0%)</span></div>
</div>
</body></html>
